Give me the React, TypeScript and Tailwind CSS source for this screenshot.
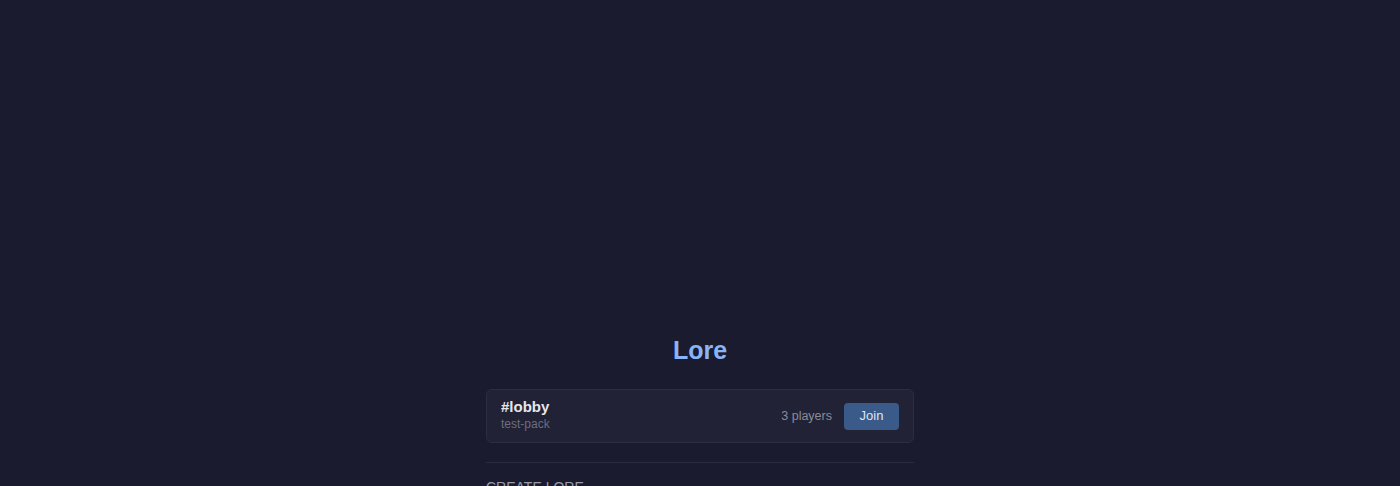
export default function App() {
	return (
		<div className="min-h-screen w-full bg-[#1a1b2e] font-['Liberation_Sans',Arial,sans-serif]">
			<div className="mx-auto w-[428px] pt-[334px]">
				{/* Title */}
				<h1 className="text-center text-[25px] leading-[32px] font-bold text-[#8ab4f8]">Lore</h1>

				{/* Room card */}
				<div className="mt-[23px] flex h-[54px] items-center justify-between rounded-md border border-[#2c2d42] bg-[#212236] pl-[14px] pr-[14px]">
					<div className="flex flex-col pb-[2px]">
						<span className="text-[15px] leading-[18px] font-bold text-[#e6e6ee]">#lobby</span>
						<span className="text-[12px] leading-[16px] text-[#6c6d7e]">test-pack</span>
					</div>
					<div className="flex items-center gap-3">
						<span className="text-[12.5px] text-[#8a8b99]">3 players</span>
						<button className="h-[27px] w-[55px] rounded bg-[#3a5a8a] text-[13px] text-[#dfe6f3]">Join</button>
					</div>
				</div>

				{/* Divider */}
				<div className="mt-[19px] h-px w-full bg-[#2a2b3f]" />

				<div className="mt-[14px] text-[14px] uppercase text-[#9a9bab]">Create Lore</div>
			</div>
		</div>
	)
}
